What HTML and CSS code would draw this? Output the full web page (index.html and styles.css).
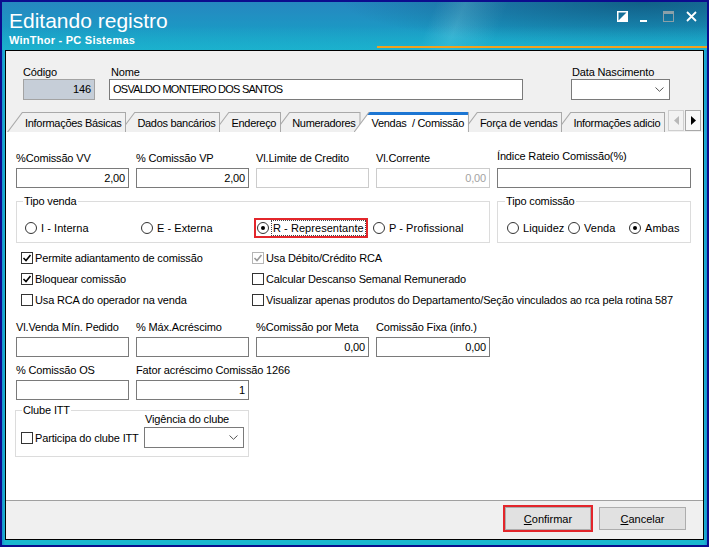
FILE: index.html
```html
<!DOCTYPE html>
<html lang="pt-BR">
<head>
<meta charset="utf-8">
<title>Editando registro</title>
<link rel="stylesheet" href="styles.css">
</head>
<body>
<div class="window">
  <header class="titlebar">
    <div class="title-texts">
      <div class="title">Editando registro</div>
      <div class="subtitle">WinThor - PC Sistemas</div>
    </div>
    <div class="title-buttons">
      <svg class="tb-icon" width="11" height="11" viewBox="0 0 11 11"><rect x="0.75" y="0.75" width="9.5" height="9.5" fill="none" stroke="#fff" stroke-width="1.5"/><polygon points="0,11 11,0 11,11" fill="#fff"/></svg>
      <svg class="tb-icon" width="11" height="11" viewBox="0 0 11 11"><rect x="0" y="9" width="7" height="2" fill="#fff"/></svg>
      <svg class="tb-icon" width="11" height="11" viewBox="0 0 11 11"><rect x="0.5" y="0.5" width="10" height="10" fill="none" stroke="#8aa0a8"/><rect x="0" y="0" width="11" height="3" fill="#8aa0a8"/></svg>
      <svg class="tb-icon" width="11" height="11" viewBox="0 0 11 11"><path d="M1 1 L10 10 M10 1 L1 10" stroke="#fff" stroke-width="1.8" fill="none"/></svg>
    </div>
  </header>
  <main class="client">
    <section class="header">
      <div class="fields">
        <div class="field f-codigo"><span class="lbl">Código</span><div class="box tall readonly">146</div></div>
        <div class="field f-nome"><span class="lbl in2">Nome</span><div class="box tall left">OSVALDO MONTEIRO DOS SANTOS</div></div>
        <div class="field f-data"><span class="lbl in1">Data Nascimento</span><div class="box tall select"><svg width="9" height="5" viewBox="0 0 9 5"><polyline points="0.5,0.5 4.5,4.3 8.5,0.5" fill="none" stroke="#555" stroke-width="1"/></svg></div></div>
      </div>
      <div class="tabstrip">
        <div class="tabs">
          <div class="tab z7">Informações Básicas</div>
          <div class="tab z6">Dados bancários</div>
          <div class="tab z5">Endereço</div>
          <div class="tab z4">Numeradores</div>
          <div class="tab active">Vendas&nbsp; / Comissão</div>
          <div class="tab z2">Força de vendas</div>
          <div class="tab z1">Informações adicio</div>
        </div>
        <div class="tab-scroll">
          <div class="scroll-btn off"><svg width="5" height="9" viewBox="0 0 5 9"><polygon points="5,0 0,4.5 5,9" fill="#b8b8b8"/></svg></div>
          <div class="scroll-btn"><svg width="5" height="9" viewBox="0 0 5 9"><polygon points="0,0 5,4.5 0,9" fill="#000"/></svg></div>
        </div>
      </div>
    </section>

    <section class="page">
      <div class="row5">
        <div class="field"><span class="lbl">%Comissão VV</span><div class="box">2,00</div></div>
        <div class="field"><span class="lbl">% Comissão VP</span><div class="box">2,00</div></div>
        <div class="field"><span class="lbl">Vl.Limite de Credito</span><div class="box disabled"></div></div>
        <div class="field"><span class="lbl">Vl.Corrente</span><div class="box disabled">0,00</div></div>
        <div class="field raised"><span class="lbl">Índice Rateio Comissão(%)</span><div class="box"></div></div>
      </div>

      <div class="row5 groups">
        <fieldset class="group tipo-venda">
          <legend>Tipo venda</legend>
          <div class="radios venda">
            <span class="radio"><i class="circ"></i>I - Interna</span>
            <span class="radio"><i class="circ"></i>E - Externa</span>
            <span class="radio checked hl"><i class="circ"></i><span class="focus">R - Representante</span></span>
            <span class="radio"><i class="circ"></i>P - Profissional</span>
          </div>
        </fieldset>
        <fieldset class="group tipo-comissao">
          <legend>Tipo comissão</legend>
          <div class="radios comissao">
            <span class="radio"><i class="circ"></i>Liquidez</span>
            <span class="radio"><i class="circ"></i>Venda</span>
            <span class="radio checked"><i class="circ"></i>Ambas</span>
          </div>
        </fieldset>
      </div>

      <div class="checks">
        <span class="check"><i class="cb"><svg width="10" height="10" viewBox="0 0 10 10"><polyline points="1.5,5 4,7.5 8.5,2" fill="none" stroke="#000" stroke-width="1.6"/></svg></i>Permite adiantamento de comissão</span>
        <span class="check"><i class="cb dis"><svg width="10" height="10" viewBox="0 0 10 10"><polyline points="1.5,5 4,7.5 8.5,2" fill="none" stroke="#9a9a9a" stroke-width="1.6"/></svg></i>Usa Débito/Crédito RCA</span>
        <span class="check"><i class="cb"><svg width="10" height="10" viewBox="0 0 10 10"><polyline points="1.5,5 4,7.5 8.5,2" fill="none" stroke="#000" stroke-width="1.6"/></svg></i>Bloquear comissão</span>
        <span class="check"><i class="cb"></i>Calcular Descanso Semanal Remunerado</span>
        <span class="check"><i class="cb"></i>Usa RCA do operador na venda</span>
        <span class="check"><i class="cb"></i>Visualizar apenas produtos do Departamento/Seção vinculados ao rca pela rotina 587</span>
      </div>

      <div class="row5 row-b">
        <div class="field"><span class="lbl">Vl.Venda Mín. Pedido</span><div class="box"></div></div>
        <div class="field"><span class="lbl">% Máx.Acréscimo</span><div class="box"></div></div>
        <div class="field"><span class="lbl">%Comissão por Meta</span><div class="box">0,00</div></div>
        <div class="field"><span class="lbl">Comissão Fixa (info.)</span><div class="box">0,00</div></div>
      </div>

      <div class="row5 row-c">
        <div class="field"><span class="lbl">% Comissão OS</span><div class="box"></div></div>
        <div class="field"><span class="lbl">Fator acréscimo Comissão 1266</span><div class="box">1</div></div>
      </div>

      <fieldset class="group clube">
        <legend>Clube ITT</legend>
        <div class="clube-body">
          <span class="check"><i class="cb"></i>Participa do clube ITT</span>
          <div class="field vig"><span class="lbl in1">Vigência do clube</span><div class="box tall select"><svg width="9" height="5" viewBox="0 0 9 5"><polyline points="0.5,0.5 4.5,4.3 8.5,0.5" fill="none" stroke="#555" stroke-width="1"/></svg></div></div>
        </div>
      </fieldset>
    </section>

    <footer class="footer">
      <div class="btn hl"><span><u>C</u>onfirmar</span></div>
      <div class="btn"><span><u>C</u>ancelar</span></div>
    </footer>
  </main>
</div>
</body>
</html>
```

FILE: styles.css
```css
* { box-sizing: border-box; }
html, body { margin: 0; padding: 0; }
body {
  width: 709px;
  height: 547px;
  overflow: hidden;
  background: #fff;
  font-family: "Liberation Sans", Arial, sans-serif;
  font-size: 11px;
  letter-spacing: -0.15px;
  color: #000;
}

.window {
  width: 709px;
  height: 547px;
  border: 2px solid #0c0c8e;
  background: linear-gradient(90deg, #1a8fd0 0, #1ab6cf 3px, #1ab6cf calc(100% - 3px), #1a8fd0 100%);
  display: flex;
  flex-direction: column;
}

/* ---------- title bar ---------- */
.titlebar {
  flex: none;
  height: 48px;
  display: flex;
  justify-content: space-between;
  align-items: flex-start;
  padding: 7px 10px 0 7px;
  color: #fff;
  letter-spacing: 0;
  background:
    linear-gradient(#f2a11c, #f2a11c) right 0 bottom 2px / 330px 2px no-repeat,
    linear-gradient(180deg, rgba(30, 180, 210, 0) 50%, rgba(30, 185, 210, 0.55) 100%),
    radial-gradient(ellipse 300px 45px at 640px 0px, rgba(5, 75, 105, 0.65), rgba(5, 75, 105, 0) 100%),
    linear-gradient(112deg, rgba(150, 230, 245, 0) 60%, rgba(150, 230, 245, 0.3) 64%, rgba(150, 230, 245, 0) 70%),
    linear-gradient(180deg, #2687c0 0%, #1c98c4 55%, #18a8c8 100%);
}
.title { font-size: 21px; line-height: 24px; }
.subtitle { font-size: 11px; line-height: 13px; font-weight: bold; margin-top: 1px; letter-spacing: 0.25px; }
.title-buttons { display: flex; gap: 12px; margin-top: 2px; }
.tb-icon { display: block; }

/* ---------- client ---------- */
.client {
  flex: 1;
  min-height: 0;
  margin: 0 3px 5px;
  border: 1px solid #000;
  background: #f0f0f0;
  display: flex;
  flex-direction: column;
}

.header { flex: none; height: 81px; padding-top: 15px; }
.fields { display: flex; padding-left: 17px; height: 34px; }
.f-codigo { width: 72px; }
.f-nome { width: 414px; margin-left: 14px; }
.f-data { width: 99px; margin-left: 48px; }

.lbl { display: block; height: 13px; line-height: 13px; white-space: nowrap; margin-bottom: 3px; }
.header .lbl { margin-bottom: 0; }
.lbl.in1 { padding-left: 1px; }
.lbl.in2 { padding-left: 2px; }

.box {
  height: 20px;
  border: 1px solid #7a7a7a;
  background: #fff;
  text-align: right;
  padding: 0 3px;
  line-height: 18px;
  white-space: nowrap;
  overflow: hidden;
}
.box.tall { height: 21px; line-height: 19px; }
.box.left { text-align: left; letter-spacing: -0.75px; }
.box.readonly { background: #c6ced8; border-color: #a3a3a3; }
.box.disabled { border-color: #cccccc; color: #a3a3a3; }
.box.select { display: flex; align-items: center; justify-content: flex-end; padding-right: 5px; }
.box.select svg { display: block; }

/* ---------- tabs ---------- */
.tabstrip { display: flex; align-items: flex-end; height: 20px; margin-top: 12px; padding-left: 1px; }
.tabs { flex: 1; min-width: 0; display: flex; height: 20px; overflow: hidden; }
.tab {
  position: relative;
  flex: none;
  height: 20px;
  padding: 4px 5px 0 18px;
  line-height: 14px;
  letter-spacing: -0.3px;
  white-space: nowrap;
  background: #a9a9a9;
  clip-path: polygon(0 100%, 15px 0, 100% 0, 100% 100%);
}
.tab + .tab { margin-left: -7px; }
.tab::before {
  content: "";
  position: absolute;
  top: 1px; left: 0; right: 1px; bottom: 0;
  background: #f0f0f0;
  clip-path: polygon(1.3px 100%, 15.55px 0, 100% 0, 100% 100%);
  z-index: -1;
}
.tab.z7 { z-index: 7; }
.tab.z6 { z-index: 6; }
.tab.z5 { z-index: 5; }
.tab.z4 { z-index: 4; }
.tab.z2 { z-index: 2; }
.tab.z1 { z-index: 1; }
.tab.active { z-index: 10; }
.tab.active::before {
  top: 0;
  background: linear-gradient(#1c76d3 0 3px, #fff 3px);
  clip-path: polygon(1.3px 100%, 16.3px 0, 100% 0, 100% 100%);
}

.tab-scroll { flex: none; display: flex; gap: 1px; width: 35px; height: 21px; align-self: flex-end; margin-bottom: 1px; }
.scroll-btn {
  width: 16px;
  height: 21px;
  border: 1px solid #a8a8a8;
  background: #f8f8f8;
  display: flex;
  align-items: center;
  justify-content: center;
}
.scroll-btn.off { border-color: #cfcfcf; background: #f2f2f2; }
.scroll-btn svg { display: block; }

/* ---------- page ---------- */
.page { flex: 1; min-height: 0; background: #fff; padding: 20px 0 0 10px; }

.row5 {
  display: grid;
  grid-template-columns: 113px 113px 113px 114px 194px;
  column-gap: 7px;
}
.field.raised .lbl { margin-top: -2px; margin-bottom: 5px; }
.row-b { margin-top: 11px; }
.row-c { margin-top: 7px; }

fieldset { margin: 0; min-width: 0; border: 1px solid #dcdcdc; }
legend { padding: 0 1px; margin-left: -2px; line-height: 13px; }

.groups { margin-top: 7px; }
.tipo-venda { grid-column: 1 / 5; padding: 13px 0 8px 8px; }
.tipo-comissao { padding: 13px 0 8px 9px; }

.radios { display: grid; grid-auto-rows: 13px; align-items: center; justify-items: start; }
.radios.venda { grid-template-columns: repeat(4, 116px); }
.radios.comissao { grid-template-columns: repeat(3, 61px); }

.radio { display: inline-flex; align-items: center; gap: 4px; white-space: nowrap; height: 13px; letter-spacing: 0.05px; }
.circ {
  position: relative;
  flex: none;
  width: 12px;
  height: 12px;
  border: 1px solid #333;
  border-radius: 50%;
  background: #fff;
}
.radio.checked .circ::after {
  content: "";
  position: absolute;
  left: 3px; top: 3px;
  width: 4px; height: 4px;
  border-radius: 50%;
  background: #000;
}
.radio.hl {
  height: 16px;
  gap: 2px;
  margin-left: -1px;
  padding-left: 1px;
  outline: 2px solid #e3262b;
}
.focus { border: 1px dotted #444; padding: 0 1px; line-height: 14px; }

.checks {
  display: grid;
  grid-template-columns: 231px auto;
  grid-auto-rows: 21px;
  align-items: center;
  margin: 4px 0 0 5px;
}
.check { display: flex; align-items: center; gap: 2px; white-space: nowrap; }
.cb {
  flex: none;
  width: 12px;
  height: 12px;
  border: 1px solid #333;
  background: #fff;
  display: flex;
  align-items: center;
  justify-content: center;
}
.cb.dis { border-color: #b5b5b5; }
.cb svg { display: block; }

.clube { width: 234px; margin: 4px 0 0 -1px; padding: 0 4px 8px 5px; }
.clube legend { margin-left: 1px; }
.clube-body { display: flex; justify-content: space-between; align-items: flex-end; }
.clube-body .check { height: 21px; }
.vig { width: 100px; margin-top: -4px; }
.vig .lbl { margin-bottom: 1px; }

/* ---------- footer ---------- */
.footer {
  flex: none;
  height: 39px;
  border-top: 1px solid #a0a0a0;
  display: flex;
  justify-content: flex-end;
  align-items: flex-start;
  gap: 8px;
  padding: 6px 17px 0 0;
}
.btn {
  width: 87px;
  height: 23px;
  border: 1px solid #adadad;
  background: #e1e1e1;
  display: flex;
  align-items: center;
  justify-content: center;
  letter-spacing: 0;
}
.btn.hl { width: 86px; outline: 2px solid #e3262b; }
```
